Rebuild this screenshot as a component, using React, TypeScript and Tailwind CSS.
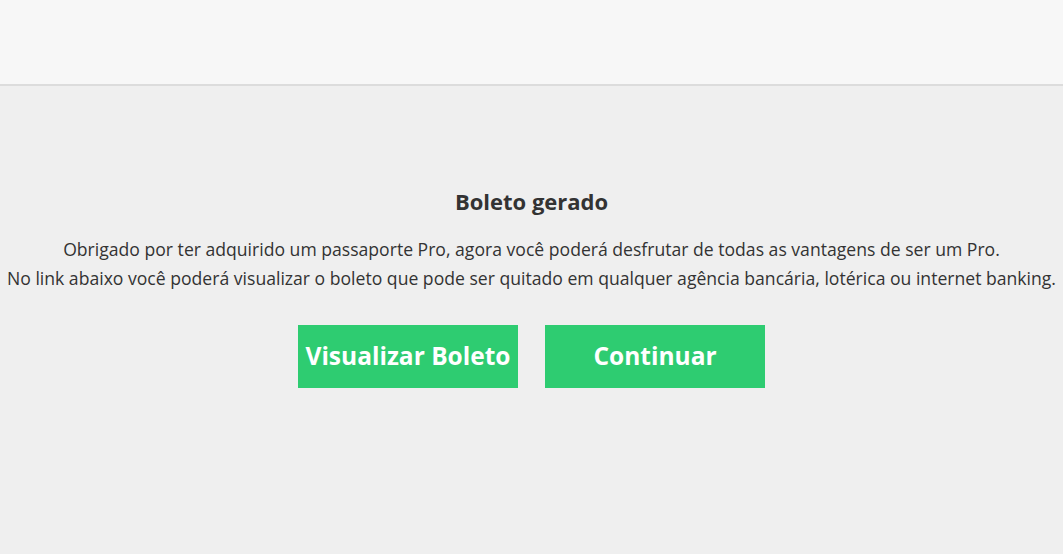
import React from 'react';

const App: React.FC = () => {
    return (
        <div className="min-h-[554px] bg-[#efefef] text-[#333] font-['Open_Sans',sans-serif]">
            <header className="h-[86px] bg-[#f7f7f7] border-b-2 border-[#dcdcdc]" />
            <main className="flex flex-col items-center pt-[100px]">
                <h2 className="text-[22px] leading-[30px] font-bold">Boleto gerado</h2>
                <div className="mt-[19px] text-center text-[17.6px] leading-[29px] whitespace-nowrap">
                    <p>Obrigado por ter adquirido um passaporte Pro, agora você poderá desfrutar de todas as vantagens de ser um Pro.</p>
                    <p>No link abaixo você poderá visualizar o boleto que pode ser quitado em qualquer agência bancária, lotérica ou internet banking.</p>
                </div>
                <div className="mt-[32px] flex gap-[27px]">
                    <button className="w-[220px] h-[63px] bg-[#2ecc71] text-white text-[24.5px] font-bold">
                        Visualizar Boleto
                    </button>
                    <button className="w-[220px] h-[63px] bg-[#2ecc71] text-white text-[24.5px] font-bold">
                        Continuar
                    </button>
                </div>
            </main>
        </div>
    );
};

export default App;
